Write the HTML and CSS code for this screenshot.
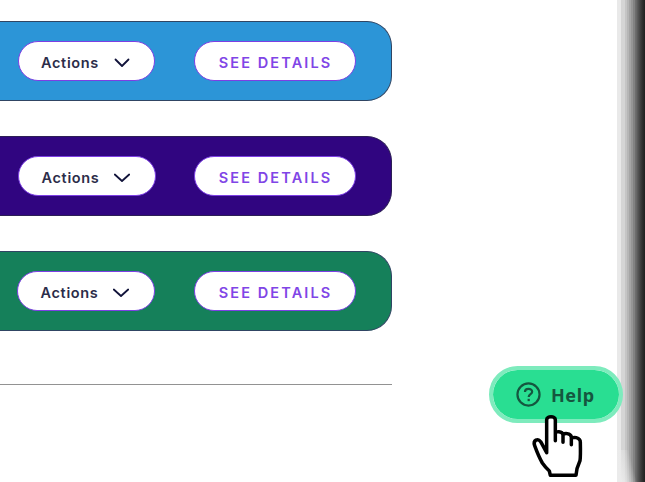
FILE: index.html
```html
<!DOCTYPE html>
<html lang="en">
<head>
<meta charset="utf-8">
<title>Actions</title>
<link rel="stylesheet" href="styles.css">
</head>
<body>
<div class="page">
<main class="list">
  <section class="card blue">
    <button class="btn actions"><span>Actions</span><svg class="chevron" viewBox="0 0 16 10"><path d="M1.5 1.5 8 8l6.5-6.5"/></svg></button>
    <button class="btn details">SEE DETAILS</button>
  </section>
  <section class="card purple">
    <button class="btn actions"><span>Actions</span><svg class="chevron" viewBox="0 0 16 10"><path d="M.8 1.5 8 8l7.2-6.5"/></svg></button>
    <button class="btn details">SEE DETAILS</button>
  </section>
  <section class="card green">
    <button class="btn actions"><span>Actions</span><svg class="chevron" viewBox="0 0 16 10"><path d="M.8 1.5 8 8l7.2-6.5"/></svg></button>
    <button class="btn details">SEE DETAILS</button>
  </section>
  <hr class="rule">
</main>
<div class="edge"></div>
</div>
<button class="help">
  <svg class="question" viewBox="0 0 26 26"><circle cx="13" cy="13" r="11.5"/><path d="M9.3 10.5C9.3 6 16.8 6.2 16.8 10.2C16.8 12.8 13.2 12.5 13.2 15.5"/><path d="M13.2 17.5v2.4"/></svg>
  <span>Help</span>
</button>
<svg class="pointer" viewBox="150 177 165 192"><path d="M211 361 208 348Q196 337 187 324Q176 305 164 272C158 255 174 249 182 260L200 293V194C200 182 226 182 226 194V257V236C226 227 247 228 249 239V262V240C250 233 273 234 274 246V269V252C276 244 302 245 301 263Q302 303 300 317L291 341 288 361Z"/></svg>
</body>
</html>
```
FILE: styles.css
```css
body { margin: 0; background: #fff; overflow: hidden; font-family: Inter, sans-serif; }
button { font: inherit; margin: 0; }
.page { display: flex; justify-content: space-between; height: 482px; }
.list { width: 392px; padding-top: 21px; }
.card {
  box-sizing: border-box;
  display: flex;
  align-items: center;
  justify-content: space-between;
  height: 80px;
  margin-bottom: 35px;
  padding: 0 35px 0 18px;
  border: 1px solid #304563;
  border-left: 0;
  border-radius: 0 25px 25px 0;
}
.blue { background: #2c95d7; }
.purple { background: #300580; border-color: #2c1f55; }
.green { background: #15805a; padding-left: 17px; }
.btn {
  box-sizing: border-box;
  display: flex;
  align-items: center;
  justify-content: center;
  height: 40px;
  border: 1px solid #7c3fe4;
  border-radius: 20px;
  background: #fff;
  font-size: 15px;
  font-weight: 600;
}
.actions { width: 137px; padding: 3px 2px 0 0; gap: 15px; color: #2c2d49; font-size: 14.5px; letter-spacing: .65px; }
.purple .actions, .green .actions { width: 138px; }
.details { width: 162px; padding: 3px 0 0 1px; color: #8045e6; font-size: 14.5px; letter-spacing: 2.1px; }
.chevron { width: 16px; height: 10px; }
.chevron path { fill: none; stroke: #11133a; stroke-width: 1.8; stroke-linecap: round; stroke-linejoin: round; }
.rule { margin: 53px 0 0; border: 0; border-top: 1px solid #929292; }
.edge {
  width: 28px;
  background:
    linear-gradient(75deg, #ebebeb 0 12%, #ebebeb00 55%) 0 100% / 28px 32px no-repeat,
    linear-gradient(90deg, #e9e9e9 0 4px, #d5d5d5 4px 8px, #c5c5c5 8px 10px, #b6b6b6 10px 12px, #a5a5a5 12px 14px, #959595 14px 16px, #828282 16px 18px, #6e6e6e 18px 19px, #606060 20px, #4c4c4c 22px, #3a3a3a 24px, #2b2b2b 26px, #202020 28px);
}
.help {
  position: absolute;
  left: 489px;
  top: 366px;
  box-sizing: border-box;
  width: 134px;
  height: 57px;
  display: flex;
  align-items: center;
  gap: 10px;
  padding: 0 0 0 23px;
  border: 4px solid #7eebbd;
  border-radius: 29px;
  background: #29de92;
  background-clip: padding-box;
  color: #15563f;
  font: 700 18px "Noto Sans", sans-serif;
  letter-spacing: .6px;
}
.question { width: 25px; height: 25px; fill: none; stroke: #15563f; stroke-width: 2.3; }
.pointer { position: absolute; left: 530px; top: 414px; width: 55px; height: 64px; }
.pointer path { fill: #fff; stroke: #000; stroke-width: 10.5; stroke-linecap: round; stroke-linejoin: round; }
```
